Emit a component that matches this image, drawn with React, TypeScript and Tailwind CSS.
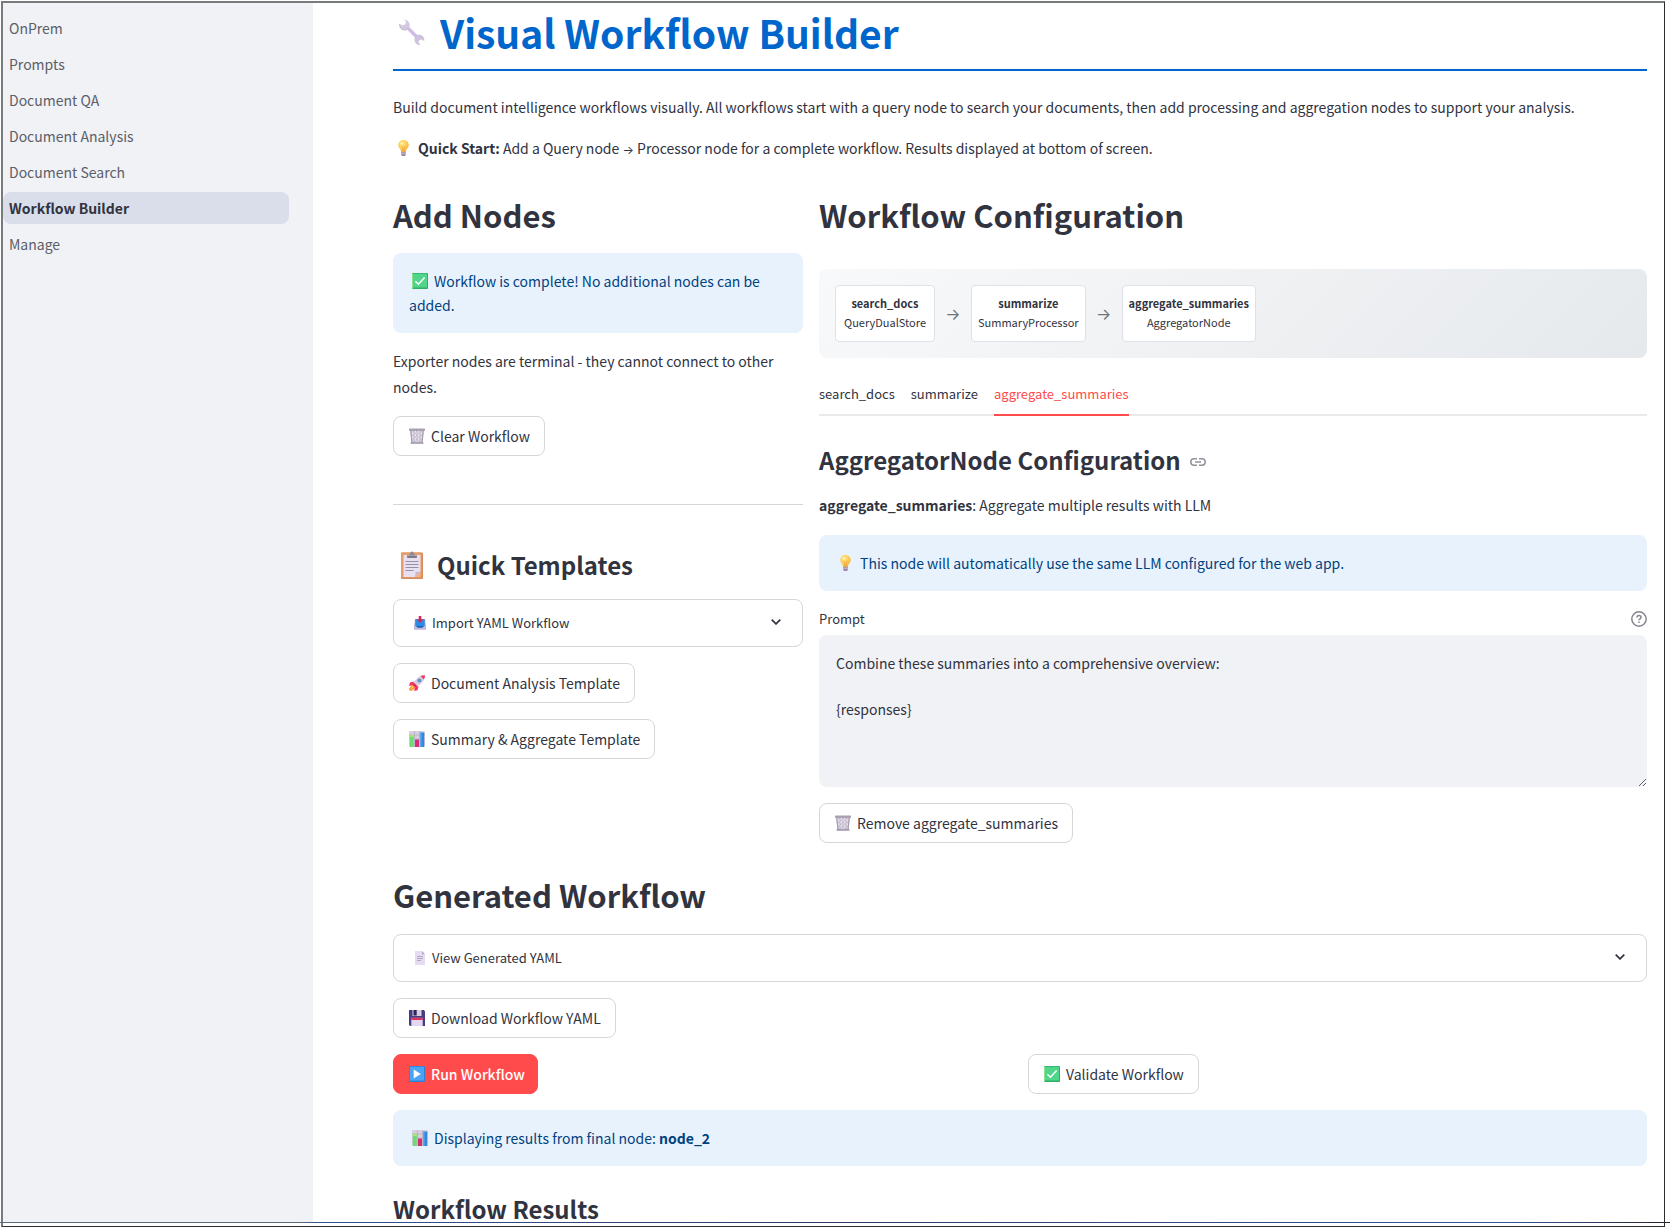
import React from "react";

type IconProps = { className: string };

function Wrench({ className }: IconProps) {
  return (
    <svg viewBox="0 0 26 27" className={className} aria-hidden="true">
      <defs>
        <linearGradient id="wr" x1="0" y1="0" x2="1" y2="1">
          <stop offset="0" stopColor="#d3cfd8" />
          <stop offset="0.5" stopColor="#d3c2ea" />
          <stop offset="1" stopColor="#c9c2d2" />
        </linearGradient>
      </defs>
      <path
        d="M5.200.800 6.800 2.400 6.400 5.200 3.800 6.600.700 5C.2 8.200 2 10.700 5 11c1.200.1 2.100-.1 2.900-.5l8 8c-.5 1-.6 2.100-.4 3.200.6 2.700 3 4.600 5.900 4.400l-2-2.800.9-2.300 2.600-.6 2.300 1.800c.7-2.700-.7-5.300-3.300-6.300-1.300-.4-2.500-.3-3.500.1L10.400 8c.5-1.200.5-2.600-.1-4C9.400 1.900 7.400.6 5.200.8Z"
        fill="url(#wr)"
      />
      <path d="m8.200 8.800 9 9.100" stroke="#c2aede" strokeWidth="1" />
      <path d="M.7 5C.2 8.200 2 10.700 5 11c1.200.1 2.100-.1 2.900-.5" fill="none" stroke="#b3abb9" strokeWidth=".7" />
    </svg>
  );
}

function Bulb({ className }: IconProps) {
  return (
    <svg viewBox="0 0 11 16" className={className} aria-hidden="true">
      <defs>
        <radialGradient id="bu" cx=".4" cy=".3" r=".75">
          <stop offset="0" stopColor="#ffe98a" />
          <stop offset=".6" stopColor="#fdc74e" />
          <stop offset="1" stopColor="#f2a73d" />
        </radialGradient>
      </defs>
      <path d="M5.500 0C2.500 0 .3 2.200.3 5c0 2.100 1.200 3.300 2.100 4.500.5.8.7 1.900.8 2.900h4.600c.1-1 .3-2.100.8-2.900.9-1.200 2.100-2.400 2.100-4.500C10.700 2.200 8.500 0 5.500 0Z" fill="url(#bu)" />
      <path d="M3.600 5.500 4.700 7v5M7.400 5.500 6.300 7v5" fill="none" stroke="#e59a35" strokeWidth=".6" />
      <path d="M3.200 12.300h4.600v2.200c0 .8-.5 1.400-1.200 1.400H4.400c-.7 0-1.200-.6-1.200-1.400Z" fill="#9c83a8" />
      <path d="M3.200 13.700h4.600" stroke="#d9cce0" strokeWidth=".7" />
      <circle cx="3.600" cy="3.400" r="1.100" fill="#fff6c4" />
    </svg>
  );
}

function Check({ className }: IconProps) {
  return (
    <svg viewBox="0 0 16 16" className={className} aria-hidden="true">
      <rect width="16" height="16" rx="1" fill="#2fae6a" />
      <rect x=".8" y=".8" width="14.200" height="13.800" rx=".6" fill="#4fd68b" />
      <path d="M.5.500V15.500" stroke="#8ee28e" />
      <path d="m3.400 8.200 3 3 6.200-6.800" fill="none" stroke="#fff" strokeWidth="1.500" />
    </svg>
  );
}

function Trash({ className }: IconProps) {
  return (
    <svg viewBox="0 0 16 16" className={className} aria-hidden="true">
      <path d="M1.200 2h13.600l-1.300 13H2.500Z" fill="#cfc6d8" />
      <path
        d="m2.500 4 10 9.500M5.500 3l8 7.500M2.500 8l6.500 6.500M13.500 4l-10 9.500M10.500 3l-8 7.500M13.500 8 7 14.500M9 3l4.500 3.500M7 3 2.500 6.500"
        stroke="#f4f1f7"
        strokeWidth=".8"
      />
      <path d="M5 3v11M8 3v11M11 3v11" stroke="#a79db2" strokeWidth=".5" />
      <path d="M1.800 3 3 15M14.200 3 13 15" stroke="#a69caf" strokeWidth="1.200" />
      <rect y=".4" width="16" height="2.500" rx=".7" fill="#aaa2b3" />
      <rect x="1.500" y="14.200" width="13" height="1.600" rx=".5" fill="#9d94a8" />
    </svg>
  );
}

function Clipboard({ className }: IconProps) {
  return (
    <svg viewBox="0 0 22 28" className={className} aria-hidden="true">
      <rect y="1.500" width="22" height="26.500" rx="1" fill="#d98b5c" />
      <rect x="0" y="1.500" width="20.500" height="25" rx="1" fill="#e59e69" />
      <path d="M2.500 4h17v16.500l-5.500 5.500H2.500Z" fill="#e6e0f0" />
      <path d="M19.500 20.500 14 26l.6-4.900Z" fill="#c9b8dc" />
      <path d="M19.500 20.500V26H14Z" fill="#f0b384" />
      <path d="M6 4.500h10v1.200c0 .8-.5 1.300-1.300 1.300H7.300C6.500 7 6 6.500 6 5.700Z" fill="#837987" />
      <path d="M8 4.500V3.200h1.300a1.800 1.800 0 0 1 3.400 0H14v1.300Z" fill="#958b99" />
      <circle cx="11" cy="2.200" r="1.700" fill="#918795" />
      <path d="M4.500 10.500h13M4.500 13.500h13M4.500 16.500h13M4.500 19.500h8" stroke="#8e8798" strokeWidth=".9" />
    </svg>
  );
}

function Inbox({ className }: IconProps) {
  return (
    <svg viewBox="0 0 12 14" className={className} aria-hidden="true">
      <path d="M1 3h10l1 7v3.500H0V10Z" fill="#bcb3d6" />
      <path d="M1.300 3.200h9.400v7H1.300Z" fill="#2b8be6" />
      <path d="M0 10h2.500l1.500 1.500h4L9.500 10H12v3.600H0Z" fill="#c3b6de" />
      <path d="M1.800 10h8.400l-2 1.700H3.800Z" fill="#1668b8" />
      <path d="M4.700 0h2.600v3.500h2L6 6.700 2.700 3.500h2Z" fill="#e0244f" />
    </svg>
  );
}

function Rocket({ className }: IconProps) {
  return (
    <svg viewBox="0 0 16 16" className={className} aria-hidden="true">
      <path d="M3.600 9.700.2 13.200l.2 2.400 2.400.2 3.700-3.100Z" fill="#fb9130" />
      <path d="M3.500 11 1.200 14.700l3.600-2.200Z" fill="#ffd047" />
      <path d="M4.800 6.400 1 7.600.1 11l4.200-1ZM9.600 11.200l-1.200 4.100-3.200.6L6 11.700Z" fill="#f2305e" />
      <path d="M15.900.2C11.500-.1 7 3 3.500 9.700l2.800 2.800C13 9 16.100 4.500 15.900.2Z" fill="#d5cde2" />
      <path d="M15.900.2c-1.600-.1-3 .2-4.400.9l3.400 3.500c.7-1.400 1.100-2.900 1-4.400Z" fill="#f5395f" />
      <path d="m3.500 9.700 1.300-2.200 3.700 3.700-2.200 1.300Z" fill="#e02656" />
      <circle cx="10.400" cy="5.600" r="2" fill="#8c819b" />
      <circle cx="10.400" cy="5.600" r="1.400" fill="#3ca2f2" />
    </svg>
  );
}

function Chart({ className }: IconProps) {
  return (
    <svg viewBox="0 0 16 16" className={className} aria-hidden="true">
      <rect width="16" height="16" rx="1" fill="#d6cfdd" />
      <path d="M0 4h16M0 8h16M0 12h16M5.500 0v16M10.500 0v16" stroke="#b5abc0" strokeWidth=".7" />
      <rect x=".8" y="4" width="4" height="12" fill="#6ddc78" />
      <path d="M.8 4h4v2h-4Z" fill="#a8e66c" />
      <rect x="6" y="8.500" width="4" height="7.500" fill="#d62e70" />
      <rect x="11.200" y="1.500" width="4" height="14.500" fill="#3388dd" />
      <path d="M11.200 1.500h1.300V16h-1.300Z" fill="#5aabf0" />
    </svg>
  );
}

function Page({ className }: IconProps) {
  return (
    <svg viewBox="0 0 12 14" className={className} aria-hidden="true">
      <path d="M1 0h7l3 3.300V14H1Z" fill="#e6dcf1" />
      <path d="M8 0v3.300h3Z" fill="#b9a8ca" />
      <path d="M3 5.500h6M3 7.500h6M3 9.500h4" stroke="#a69bb3" strokeWidth=".8" />
    </svg>
  );
}

function Floppy({ className }: IconProps) {
  return (
    <svg viewBox="0 0 16 16" className={className} aria-hidden="true">
      <path d="M0 0h14.800L16 1.200V16H1.200L0 14.800Z" fill="#4b3b80" />
      <rect x="3.500" width="9" height="6" fill="#d8cfe2" />
      <rect x="4.500" width="3.200" height="5.500" fill="#2f2758" />
      <rect x="2.300" y="7.800" width="11.400" height="8.200" fill="#e3d7f0" />
      <rect x="2.300" y="7.800" width="11.400" height="2.200" fill="#e0315f" />
    </svg>
  );
}

function Play({ className }: IconProps) {
  return (
    <svg viewBox="0 0 16 16" className={className} aria-hidden="true">
      <rect width="16" height="16" rx="1" fill="#2f7fd6" />
      <rect x=".8" y=".8" width="14.200" height="13.800" fill="#4ba3f5" />
      <path d="M4.700 3.500 11.800 8l-7.100 4.500Z" fill="#fff" />
    </svg>
  );
}

function Chevron() {
  return (
    <svg viewBox="0 0 10 6" className="mb-[2px] h-[6px] w-[10px]" aria-hidden="true">
      <path d="m.7.700 4.300 4.200L9.300.7" fill="none" stroke="#31333f" strokeWidth="1.700" />
    </svg>
  );
}

function Button({
  icon,
  children,
  primary,
}: {
  icon: React.ReactNode;
  children: React.ReactNode;
  primary?: boolean;
}) {
  return (
    <button
      type="button"
      className={
        primary
          ? "flex h-10 items-center gap-[6px] rounded-lg border border-[#ff4b4b] bg-[#ff4b4b] pr-3 pl-[15px] font-medium whitespace-nowrap text-white"
          : "flex h-10 items-center gap-[6px] rounded-lg border border-[#d6d6d9] bg-white pr-[14px] pl-[15px] whitespace-nowrap"
      }
    >
      {icon}
      <span>{children}</span>
    </button>
  );
}

function Expander({ icon, children }: { icon: React.ReactNode; children: React.ReactNode }) {
  return (
    <button
      type="button"
      aria-expanded="false"
      className="flex h-12 w-full items-center rounded-lg border border-[#d6d6d9] pr-[21px] pl-5 text-[13px]"
    >
      {icon}
      <span className="ml-[6px] flex-1 text-left">{children}</span>
      <Chevron />
    </button>
  );
}

function Info({ children }: { children: React.ReactNode }) {
  return <div className="rounded-lg bg-[#e8f2fc] p-4 leading-6 text-[#004280]">{children}</div>;
}

function Node({ name, kind }: { name: string; kind: string }) {
  return (
    <div className="min-w-[100px] rounded border border-[#dee2e6] bg-white px-[6px] pt-2 pb-[9px] text-center text-[11px] leading-[19px]">
      <div className="font-bold">{name}</div>
      <div>{kind}</div>
    </div>
  );
}

function Arrow() {
  return <span className="w-9 text-center font-[Inter] text-[16px] text-[#6c757d]">→</span>;
}

const pages = ["OnPrem", "Prompts", "Document QA", "Document Analysis", "Document Search", "Workflow Builder", "Manage"];
const tabs = ["search_docs", "summarize", "aggregate_summaries"];
const small = "h-4 w-4 shrink-0";

export default function App() {
  return (
    <div className="flex h-screen flex-col overflow-hidden bg-white pt-px font-['Noto_Sans_CJK_SC',sans-serif] text-[14px] text-[#31333f]">
      <div className="mr-[5px] ml-px flex min-h-0 flex-1 overflow-hidden border-t-2 border-r border-l-2 border-t-[#777b7b] border-r-[#2d2d2d] border-l-[#777b7b]">
        <nav className="w-[310px] shrink-0 bg-[#f0f2f6] pt-[9px] pr-6">
          {pages.map((p) => (
            <a
              key={p}
              href="#"
              aria-current={p === "Workflow Builder" ? "page" : undefined}
              className={
                p === "Workflow Builder"
                  ? "mb-1 flex h-8 items-center rounded-lg bg-[#dadeea] pl-[6px] font-bold"
                  : "mb-1 flex h-8 items-center pl-[6px] text-[#5c5e68]"
              }
            >
              {p}
            </a>
          ))}
        </nav>

        <main className="min-w-0 flex-1 pr-[17px] pl-20">
          <h1 className="flex items-center border-b-2 border-[#0066cc] pt-px pb-[9px] text-[39px] leading-[56px] font-bold text-[#0066cc]">
            <Wrench className="mr-[15px] ml-[6px] h-[27px] w-[26px]" />
            Visual Workflow Builder
          </h1>
          <p className="mt-[23px] leading-[26px]">
            Build document intelligence workflows visually. All workflows start with a query node to search your
            documents, then add processing and aggregation nodes to support your analysis.
          </p>
          <p className="mt-[15px] flex items-center leading-[26px]">
            <Bulb className="mr-[9px] ml-[5px] h-4 w-[11px]" />
            <span>
              <strong>Quick Start:</strong> Add a Query node <span className="font-[Inter] text-[12px] leading-none">→</span>{" "}
              Processor node for a complete workflow. Results displayed at bottom of screen.
            </span>
          </p>

          <div className="mt-[31px] grid grid-cols-[410fr_828fr] gap-4">
            <section>
              <h2 className="mb-4 text-[31px] leading-[45px] font-bold">Add Nodes</h2>
              <Info>
                <Check className="mr-[6px] mb-1 ml-[3px] inline h-4 w-4" />
                Workflow is complete! No additional nodes can be added.
              </Info>
              <p className="mt-[15px] mb-4 leading-[26px]">
                Exporter nodes are terminal - they cannot connect to other nodes.
              </p>
              <Button icon={<Trash className={small} />}>Clear Workflow</Button>
              <hr className="mt-12 border-[#d6d6d9]" />
              <h3 className="mt-[42px] mb-4 flex items-center text-[24px] leading-9 font-bold">
                <Clipboard className="mr-[14px] ml-2 h-7 w-[22px]" />
                Quick Templates
              </h3>
              <div className="flex flex-col items-start gap-4">
                <Expander icon={<Inbox className="h-[14px] w-3" />}>Import YAML Workflow</Expander>
                <Button icon={<Rocket className={small} />}>Document Analysis Template</Button>
                <Button icon={<Chart className={small} />}>Summary &amp; Aggregate Template</Button>
              </div>
            </section>

            <section>
              <h2 className="mb-8 text-[31px] leading-[45px] font-bold">Workflow Configuration</h2>
              <div className="mb-4 flex items-center rounded-lg bg-[linear-gradient(135deg,#f8f9fa_0%,#e6e9ec_100%)] p-4">
                <Node name="search_docs" kind="QueryDualStore" />
                <Arrow />
                <Node name="summarize" kind="SummaryProcessor" />
                <Arrow />
                <Node name="aggregate_summaries" kind="AggregatorNode" />
              </div>
              <div role="tablist" className="flex h-[42px] gap-4 text-[13px] shadow-[inset_0_-2px_0_#eaeaec]">
                {tabs.map((t) => (
                  <button
                    key={t}
                    type="button"
                    role="tab"
                    aria-selected={t === "aggregate_summaries"}
                    className={
                      t === "aggregate_summaries"
                        ? "border-b-2 border-[#ff4b4b] text-[#ff4b4b]"
                        : "border-b-2 border-transparent"
                    }
                  >
                    {t}
                  </button>
                ))}
              </div>
              <h3 className="mt-[26px] flex items-center text-[24px] leading-9 font-bold">
                AggregatorNode Configuration
                <a href="#aggregator" aria-label="Link to heading" className="mt-1 ml-[9px]">
                  <svg viewBox="0 0 16 8" className="h-2 w-4" fill="none" stroke="#92939b" strokeWidth="1.500">
                    <path d="M7 .800H4a3.200 3.200 0 0 0 0 6.400h3M9 .800h3a3.200 3.200 0 0 1 0 6.400H9M5 4h6" />
                  </svg>
                </a>
              </h3>
              <p className="mt-[14px] mb-[17px] leading-[26px]">
                <strong>aggregate_summaries</strong>: Aggregate multiple results with LLM
              </p>
              <Info>
                <Bulb className="mr-[9px] mb-1 ml-[5px] inline h-4 w-[11px]" />
                This node will automatically use the same LLM configured for the web app.
              </Info>
              <div className="mt-[18px] mb-[6px] flex items-center justify-between text-[13px] leading-5">
                <label htmlFor="prompt">Prompt</label>
                <button type="button" aria-label="Help">
                  <svg viewBox="0 0 16 16" className="h-4 w-4" fill="none" stroke="#85868e" strokeWidth="1.500">
                    <circle cx="8" cy="8" r="7.200" />
                    <path d="M6 6.400C6 5.200 6.900 4.500 8 4.500s2 .8 2 1.900c0 1.400-2 1.500-2 2.900M8 10.600v1.500" />
                  </svg>
                </button>
              </div>
              <textarea
                id="prompt"
                className="block h-[152px] w-full resize-y rounded-lg bg-[#f0f2f6] px-[17px] pt-[17px] leading-[23px] outline-none"
                defaultValue={"Combine these summaries into a comprehensive overview:\n\n{responses}"}
              />
              <div className="mt-4">
                <Button icon={<Trash className={small} />}>Remove aggregate_summaries</Button>
              </div>
            </section>
          </div>

          <h2 className="mt-[29px] mb-[17px] text-[31px] leading-[45px] font-bold">Generated Workflow</h2>
          <div className="flex flex-col items-start gap-4">
            <Expander icon={<Page className="h-[14px] w-3" />}>View Generated YAML</Expander>
            <Button icon={<Floppy className={small} />}>Download Workflow YAML</Button>
            <div className="grid w-full grid-cols-2 justify-items-start gap-4">
              <Button primary icon={<Play className={small} />}>
                Run Workflow
              </Button>
              <Button icon={<Check className={small} />}>Validate Workflow</Button>
            </div>
            <div className="w-full">
              <Info>
                <Chart className="mr-[6px] mb-1 ml-[3px] inline h-4 w-4" />
                Displaying results from final node: <strong>node_2</strong>
              </Info>
            </div>
          </div>
          <h3 className="mt-[25px] text-[24px] leading-9 font-bold">Workflow Results</h3>
        </main>
      </div>
      <div className="h-px shrink-0 bg-[linear-gradient(90deg,#5f6b7d_0%,#5f6b7d_18%,#2f5590_19%,#2b3a66_50%,#34599a_90%,#2a2230_100%)]" />
      <div className="mr-[5px] ml-px h-1 shrink-0 border-r border-b border-l-2 border-r-[#2d2d2d] border-b-[#2d2d2d] border-l-[#777b7b]" />
    </div>
  );
}
